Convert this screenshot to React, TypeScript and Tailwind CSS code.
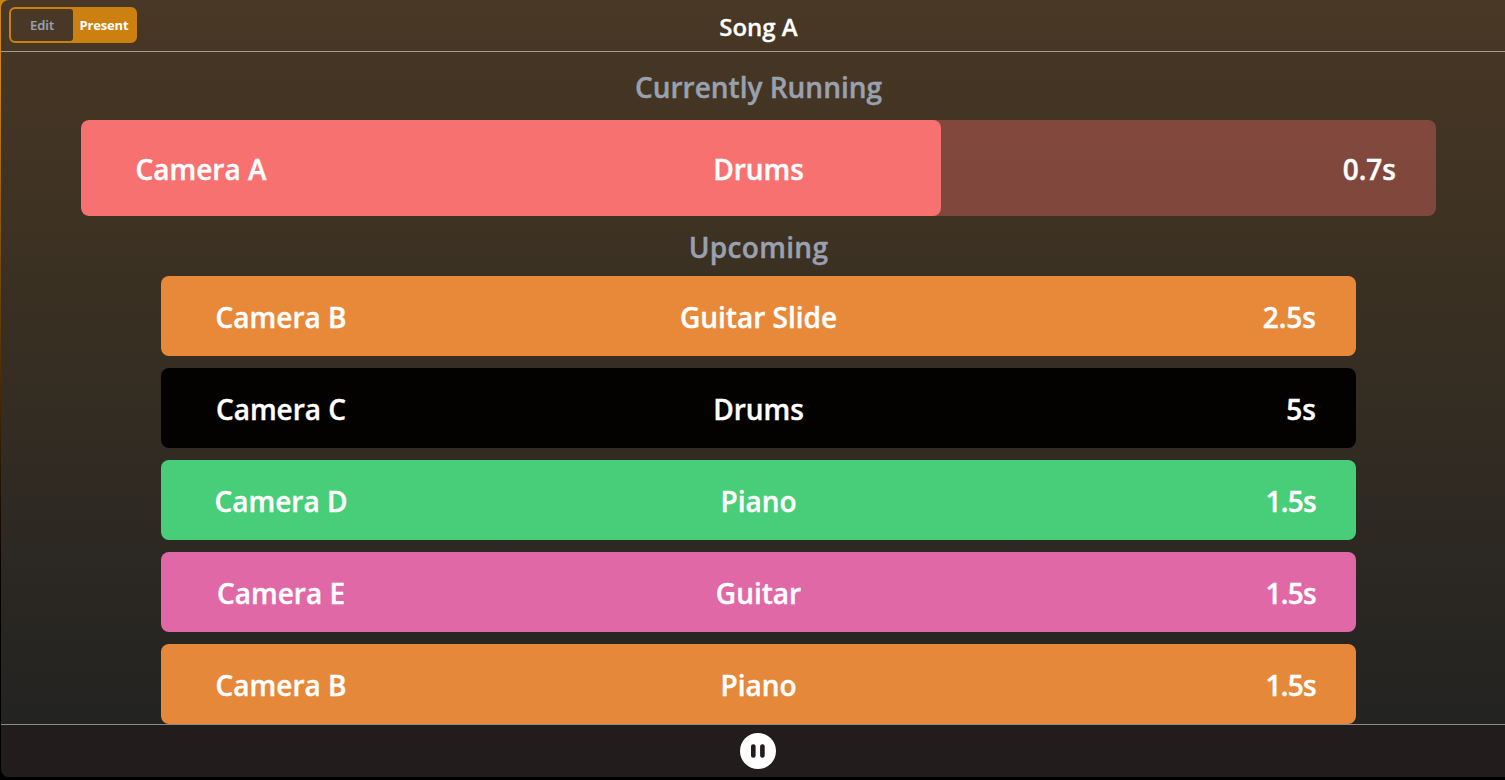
type Cue = { camera: string; source: string; time: string; color: string };

const upcoming: Cue[] = [
  { camera: 'Camera B', source: 'Guitar Slide', time: '2.5s', color: 'bg-[#e78939]' },
  { camera: 'Camera C', source: 'Drums', time: '5s', color: 'bg-[#040200]' },
  { camera: 'Camera D', source: 'Piano', time: '1.5s', color: 'bg-[#48cd78]' },
  { camera: 'Camera E', source: 'Guitar', time: '1.5s', color: 'bg-[#e068a6]' },
  { camera: 'Camera B', source: 'Piano', time: '1.5s', color: 'bg-[#e68839]' },
];

function CueText({ camera, source, time }: { camera: string; source: string; time: string }) {
  return (
    <>
      <span className="w-40 text-center">{camera}</span>
      <span className="flex-1 text-center">{source}</span>
      <span className={`w-40 text-right ${time.startsWith('1') ? '-tracking-[0.7px]' : ''}`}>{time}</span>
    </>
  );
}

export default function App() {
  return (
    <div className="h-[780px] w-full overflow-hidden bg-linear-to-b from-[#d08414] from-10% to-black to-85% pl-px font-['Open_Sans',sans-serif] font-semibold text-white">
      <div className="flex h-[777px] w-[1515px] flex-col overflow-hidden rounded-lg bg-linear-to-b from-[#493825] to-[#221c1c]">
        <header className="grid h-[52px] shrink-0 grid-cols-3 items-center border-b border-[#a39b90] px-2">
          <div className="mb-0.5 flex h-9 w-32 overflow-hidden rounded-md border-2 border-[#cc8010] bg-[#cc8010] text-[13px]">
            <button className="flex-1 rounded-[3px] bg-[#483825] pt-0.5 text-gray-400 [-webkit-text-stroke:0.2px]">Edit</button>
            <button className="w-[62px] bg-[#cc8010] pt-0.5 font-bold -tracking-[0.15px]">Present</button>
          </div>
          <h1 className="pt-0.5 text-center text-[24px] leading-none [-webkit-text-stroke:0.3px]">Song A</h1>
        </header>

        <main className="flex h-[672px] shrink-0 flex-col overflow-hidden bg-linear-to-b from-[#463624] via-[#3a3022] via-35% to-[#232322] px-20 text-[28px] leading-9 [-webkit-text-stroke:0.4px]">
          <h2 className="mt-[17px] text-center text-gray-400">Currently Running</h2>
          <div className="mt-[15px] grid h-24 shrink-0 overflow-hidden rounded-lg bg-[#f87171]/35">
            <div className="col-start-1 row-start-1 w-[860px] rounded-lg bg-[#f87171]" />
            <div className="z-10 col-start-1 row-start-1 flex items-center px-10 pt-0.5">
              <CueText camera="Camera A" source="Drums" time="0.7s" />
            </div>
          </div>
          <h2 className="mt-[13px] text-center tracking-[0.3px] text-gray-400">Upcoming</h2>
          <div className="mt-[11px] flex flex-col gap-3 px-20">
            {upcoming.map((cue, i) => (
              <div key={i} className={`flex h-20 shrink-0 items-center rounded-lg px-10 pt-0.5 ${cue.color}`}>
                <CueText {...cue} />
              </div>
            ))}
          </div>
        </main>

        <footer className="flex flex-1 items-center justify-center border-t border-[#8b8b89] bg-[#221c1c] pr-px">
          <button aria-label="Pause">
            <svg className="size-9" viewBox="0 0 36 36">
              <circle cx="18" cy="18" r="18" fill="white" />
              <rect x="11" y="11.2" width="4.6" height="13.6" rx="2.2" fill="#221c1c" />
              <rect x="20.1" y="11.2" width="4.6" height="13.6" rx="2.2" fill="#221c1c" />
            </svg>
          </button>
        </footer>
      </div>
    </div>
  );
}
